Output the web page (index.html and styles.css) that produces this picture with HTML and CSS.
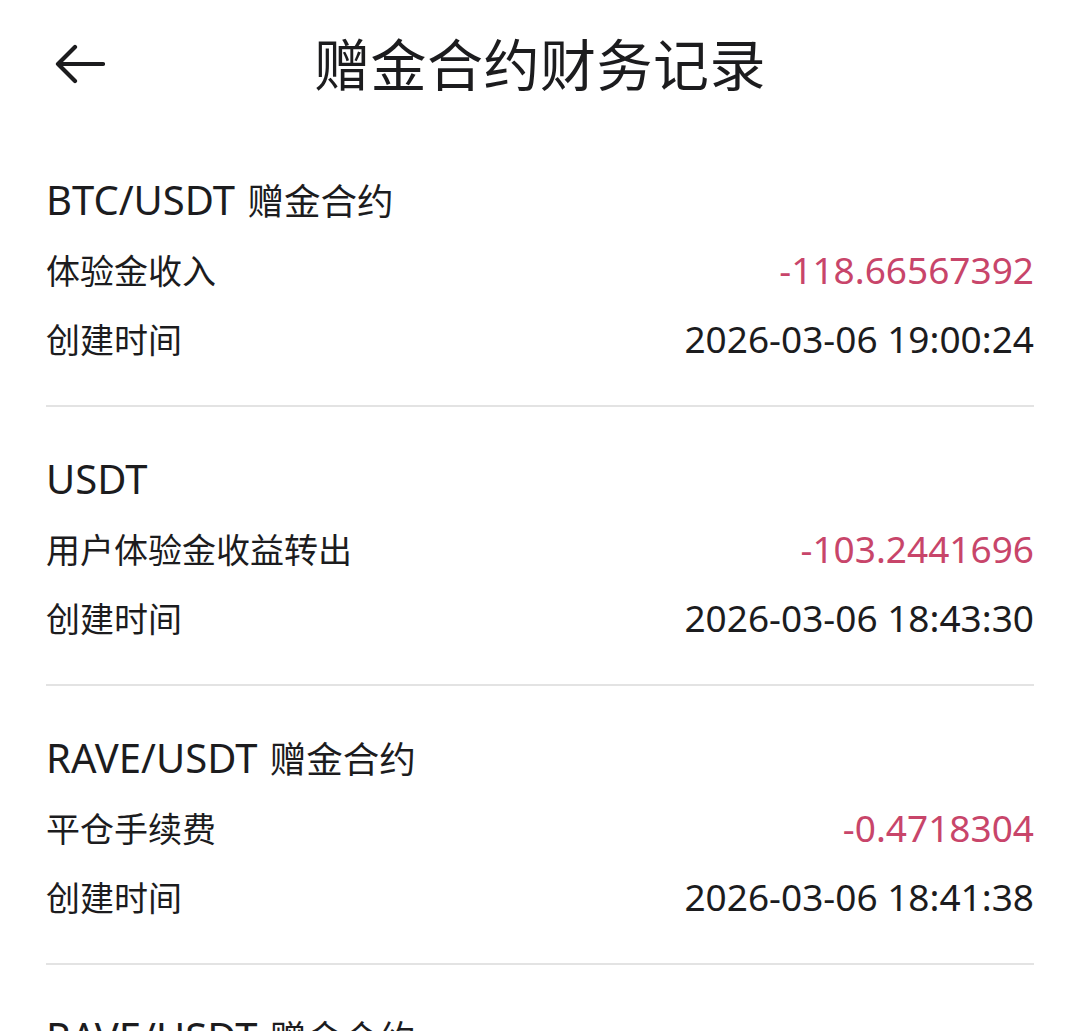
FILE: index.html
```html
<!DOCTYPE html>
<html lang="zh-CN">
<head>
    <meta charset="UTF-8">
    <meta name="viewport" content="width=device-width, initial-scale=1.0">
    <title>赠金合约财务记录</title>
    <link rel="stylesheet" href="styles.css">
</head>
<body>
    <header class="top-bar">
        <!-- 戻るボタン -->
        <button class="back-btn" aria-label="返回">
            <svg width="52" height="40" viewBox="0 0 52 40">
                <path d="M50 20H5M22 3L5 20l17 17" fill="none" stroke="#1c1c1e" stroke-width="4.2" stroke-linecap="round" stroke-linejoin="round"/>
            </svg>
        </button>
        <h1 class="page-title">赠金合约财务记录</h1>
    </header>
    <main class="record-list">
        <section class="record">
            <div class="record-name">BTC/USDT <span class="cjk">赠金合约</span></div>
            <div class="record-row">
                <span class="label">体验金收入</span>
                <span class="value amount">-118.66567392</span>
            </div>
            <div class="record-row">
                <span class="label">创建时间</span>
                <span class="value">2026-03-06 19:00:24</span>
            </div>
        </section>
        <section class="record">
            <div class="record-name">USDT</div>
            <div class="record-row">
                <span class="label">用户体验金收益转出</span>
                <span class="value amount">-103.2441696</span>
            </div>
            <div class="record-row">
                <span class="label">创建时间</span>
                <span class="value">2026-03-06 18:43:30</span>
            </div>
        </section>
        <section class="record">
            <div class="record-name">RAVE/USDT <span class="cjk">赠金合约</span></div>
            <div class="record-row">
                <span class="label">平仓手续费</span>
                <span class="value amount">-0.4718304</span>
            </div>
            <div class="record-row">
                <span class="label">创建时间</span>
                <span class="value">2026-03-06 18:41:38</span>
            </div>
        </section>
        <section class="record">
            <div class="record-name">RAVE/USDT <span class="cjk">赠金合约</span></div>
            <div class="record-row">
                <span class="label">平仓手续费</span>
                <span class="value amount">-0.2231690</span>
            </div>
            <div class="record-row">
                <span class="label">创建时间</span>
                <span class="value">2026-03-06 18:40:12</span>
            </div>
        </section>
    </main>
</body>
</html>
```

FILE: styles.css
```css
/* 基本のスタイル設定 */
body {
    margin: 0;
    padding: 0;
    font-family: "Noto Sans", "Noto Sans CJK SC", sans-serif;
    background-color: #fff;
    color: #1c1c1e;
    overflow: hidden;
}

/* ヘッダー */
.top-bar {
    height: 128px;
    display: flex;
    align-items: center;
    justify-content: center;
    position: relative;
}

.back-btn {
    position: absolute;
    left: 53px;
    top: 44px;
    padding: 0;
    border: none;
    background: none;
    cursor: pointer;
}

.back-btn svg {
    display: block;
}

.page-title {
    margin: -5px 0 0;
    font-size: 56px;
    font-weight: 400;
    letter-spacing: 0.5px;
}

/* 記録リスト */
.record-list {
    padding: 0 46px;
}

.record {
    padding: 37px 0 32px;
    border-bottom: 2px solid #e3e3e3;
}

.record-name {
    height: 70px;
    line-height: 70px;
    font-size: 40px;
}

.record-name .cjk {
    font-size: 36.5px;
    margin-left: 2px;
}

.record-row {
    height: 69px;
    line-height: 69px;
    display: flex;
    justify-content: space-between;
    align-items: baseline;
}

.label {
    font-size: 34px;
}

.value {
    font-size: 37px;
}

.amount {
    color: #c8456a;
}
```
